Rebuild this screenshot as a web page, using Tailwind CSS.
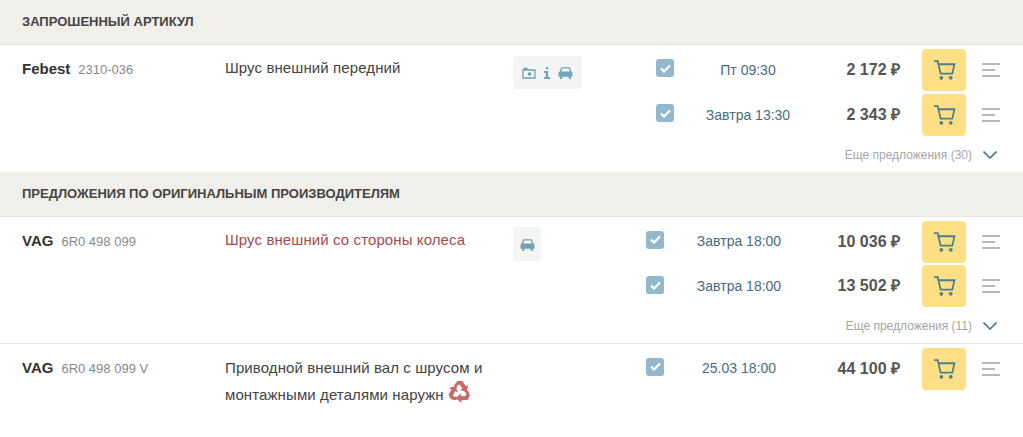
<!DOCTYPE html>
<html lang="ru">
<head>
  <meta charset="UTF-8">
  <title>Предложения</title>
  <script src="https://cdn.jsdelivr.net/npm/@tailwindcss/browser@4"></script>
</head>
<body class="w-[1023px] h-[437px] overflow-hidden bg-white font-['Liberation_Sans',Arial,sans-serif] text-[14px] text-[#444]">

  <!-- ЗАПРОШЕННЫЙ АРТИКУЛ -->
  <div class="h-[45px] pl-[22px] flex items-center bg-[#f1efe9] border-b border-[#e6e5e1] text-[13px] font-bold text-[#444]">ЗАПРОШЕННЫЙ АРТИКУЛ</div>

  <div class="h-[127px] flex">
    <div class="w-[203px] ml-[22px] pt-[13px] flex items-baseline">
      <b class="text-[15px] text-[#333]">Febest</b>
      <span class="ml-[8px] text-[13px] text-[#888]">2310-036</span>
    </div>
    <div class="w-[288px] pt-[13px] text-[15px] tracking-[0.1px] leading-[20px] text-[#444]">Шрус внешний передний</div>
    <div class="w-[127px] pt-[11px]">
      <div class="w-[69px] h-[33px] rounded-[3px] bg-[#f4f4f4] flex items-center justify-center gap-[7px] text-[#6fa3b5]">
        <svg width="14" height="12" viewBox="0 0 14 12" fill="none" stroke="currentColor" stroke-width="1.300"><path d="M1 3h12v8H1zM2 3V1.500h3V3"/><circle cx="7.500" cy="7" r="1.200" fill="currentColor"/></svg>
        <svg width="8" height="12" viewBox="0 0 8 12" fill="currentColor"><path d="M3 0h2.200v2.200H3zM1 4h4.200v6H7v2H1v-2h1.800V6H1z"/></svg>
        <svg width="15" height="13" viewBox="0 0 14 12" fill="currentColor"><path d="M3 1h8l1.500 4 1 1v4h-1.500v2h-2v-2H4v2H2v-2H.5V6l1-1zM3.800 2.300 3 5h8l-.8-2.700z" fill-rule="evenodd"/></svg>
      </div>
    </div>
    <div class="flex-1">
      <div class="h-[47px] flex items-center pt-[3px]">
        <div class="ml-[16px] -mt-[4px] w-[18px] h-[18px] rounded-[3px] bg-[#93b8cc] flex items-center justify-center">
          <svg width="11" height="9" viewBox="0 0 11 9" fill="none" stroke="#fff" stroke-width="2.200"><path d="M1 4.500l3 3 6-6"/></svg>
        </div>
        <div class="w-[148px] text-center text-[14px] text-[#4b6b80]">Пт 09:30</div>
        <div class="w-[78px] text-right text-[16px] font-bold text-[#555]">2 172 ₽</div>
        <div class="ml-[22px] w-[44px] h-[42px] rounded-[4px] bg-[#ffdf85] flex items-center justify-center">
          <svg width="23" height="20" viewBox="0 0 22 19" fill="none" stroke="#4d7f86" stroke-width="1.700"><path d="M1 1h3.500l2.800 12h11.200l2-9H5"/><circle cx="8" cy="17" r="1.800" fill="#4d7f86" stroke="none"/><circle cx="17" cy="17" r="1.800" fill="#4d7f86" stroke="none"/></svg>
        </div>
        <div class="ml-[16px] w-[18px] flex flex-col gap-[4px]"><i class="block h-[2px] w-[18px] bg-[#b9b9b9]"></i><i class="block h-[2px] w-[13px] bg-[#b9b9b9]"></i><i class="block h-[2px] w-[18px] bg-[#b9b9b9]"></i></div>
      </div>
      <div class="h-[46px] flex items-center">
        <div class="ml-[16px] -mt-[4px] w-[18px] h-[18px] rounded-[3px] bg-[#93b8cc] flex items-center justify-center">
          <svg width="11" height="9" viewBox="0 0 11 9" fill="none" stroke="#fff" stroke-width="2.200"><path d="M1 4.500l3 3 6-6"/></svg>
        </div>
        <div class="w-[148px] text-center text-[14px] text-[#4b6b80]">Завтра 13:30</div>
        <div class="w-[78px] text-right text-[16px] font-bold text-[#555]">2 343 ₽</div>
        <div class="ml-[22px] w-[44px] h-[42px] rounded-[4px] bg-[#ffdf85] flex items-center justify-center">
          <svg width="23" height="20" viewBox="0 0 22 19" fill="none" stroke="#4d7f86" stroke-width="1.700"><path d="M1 1h3.500l2.800 12h11.200l2-9H5"/><circle cx="8" cy="17" r="1.800" fill="#4d7f86" stroke="none"/><circle cx="17" cy="17" r="1.800" fill="#4d7f86" stroke="none"/></svg>
        </div>
        <div class="ml-[16px] w-[18px] flex flex-col gap-[4px]"><i class="block h-[2px] w-[18px] bg-[#b9b9b9]"></i><i class="block h-[2px] w-[13px] bg-[#b9b9b9]"></i><i class="block h-[2px] w-[18px] bg-[#b9b9b9]"></i></div>
      </div>
      <div class="h-[34px] flex items-center justify-end pr-[26px] gap-[11px] text-[12px] text-[#a5a5a5]">
        <span>Еще предложения (30)</span>
        <svg width="14" height="8" viewBox="0 0 14 8" fill="none" stroke="#4b7290" stroke-width="1.600"><path d="M.5 .5l6.500 6.500L13.500 .5"/></svg>
      </div>
    </div>
  </div>

  <!-- ПРЕДЛОЖЕНИЯ ПО ОРИГИНАЛЬНЫМ ПРОИЗВОДИТЕЛЯМ -->
  <div class="h-[45px] pl-[22px] flex items-center bg-[#f1efe9] border-b border-[#e6e5e1] text-[13px] font-bold text-[#444]">ПРЕДЛОЖЕНИЯ ПО ОРИГИНАЛЬНЫМ ПРОИЗВОДИТЕЛЯМ</div>

  <div class="h-[127px] flex border-b border-[#e6e6e6]">
    <div class="w-[203px] ml-[22px] pt-[13px] flex items-baseline">
      <b class="text-[15px] text-[#333]">VAG</b>
      <span class="ml-[8px] text-[13px] text-[#888]">6R0 498 099</span>
    </div>
    <div class="w-[288px] pt-[13px] text-[15px] tracking-[0.1px] leading-[20px] text-[#a84a4a]">Шрус внешний со стороны колеса</div>
    <div class="w-[117px] pt-[10px]">
      <div class="w-[28px] h-[34px] rounded-[3px] bg-[#f4f4f4] flex items-center justify-center text-[#6fa3b5]">
        <svg width="15" height="13" viewBox="0 0 14 12" fill="currentColor"><path d="M3 1h8l1.500 4 1 1v4h-1.500v2h-2v-2H4v2H2v-2H.5V6l1-1zM3.800 2.300 3 5h8l-.8-2.700z" fill-rule="evenodd"/></svg>
      </div>
    </div>
    <div class="flex-1">
      <div class="h-[46px] flex items-center pt-[3px]">
        <div class="ml-[16px] -mt-[4px] w-[18px] h-[18px] rounded-[3px] bg-[#93b8cc] flex items-center justify-center">
          <svg width="11" height="9" viewBox="0 0 11 9" fill="none" stroke="#fff" stroke-width="2.200"><path d="M1 4.500l3 3 6-6"/></svg>
        </div>
        <div class="w-[150px] text-center text-[14px] text-[#4b6b80]">Завтра 18:00</div>
        <div class="w-[86px] text-right text-[16px] font-bold text-[#555]">10 036 ₽</div>
        <div class="ml-[22px] w-[44px] h-[42px] rounded-[4px] bg-[#ffdf85] flex items-center justify-center">
          <svg width="23" height="20" viewBox="0 0 22 19" fill="none" stroke="#4d7f86" stroke-width="1.700"><path d="M1 1h3.500l2.800 12h11.200l2-9H5"/><circle cx="8" cy="17" r="1.800" fill="#4d7f86" stroke="none"/><circle cx="17" cy="17" r="1.800" fill="#4d7f86" stroke="none"/></svg>
        </div>
        <div class="ml-[16px] w-[18px] flex flex-col gap-[4px]"><i class="block h-[2px] w-[18px] bg-[#b9b9b9]"></i><i class="block h-[2px] w-[13px] bg-[#b9b9b9]"></i><i class="block h-[2px] w-[18px] bg-[#b9b9b9]"></i></div>
      </div>
      <div class="h-[46px] flex items-center">
        <div class="ml-[16px] -mt-[2px] w-[18px] h-[18px] rounded-[3px] bg-[#93b8cc] flex items-center justify-center">
          <svg width="11" height="9" viewBox="0 0 11 9" fill="none" stroke="#fff" stroke-width="2.200"><path d="M1 4.500l3 3 6-6"/></svg>
        </div>
        <div class="w-[150px] text-center text-[14px] text-[#4b6b80]">Завтра 18:00</div>
        <div class="w-[86px] text-right text-[16px] font-bold text-[#555]">13 502 ₽</div>
        <div class="ml-[22px] w-[44px] h-[42px] rounded-[4px] bg-[#ffdf85] flex items-center justify-center">
          <svg width="23" height="20" viewBox="0 0 22 19" fill="none" stroke="#4d7f86" stroke-width="1.700"><path d="M1 1h3.500l2.800 12h11.200l2-9H5"/><circle cx="8" cy="17" r="1.800" fill="#4d7f86" stroke="none"/><circle cx="17" cy="17" r="1.800" fill="#4d7f86" stroke="none"/></svg>
        </div>
        <div class="ml-[16px] w-[18px] flex flex-col gap-[4px]"><i class="block h-[2px] w-[18px] bg-[#b9b9b9]"></i><i class="block h-[2px] w-[13px] bg-[#b9b9b9]"></i><i class="block h-[2px] w-[18px] bg-[#b9b9b9]"></i></div>
      </div>
      <div class="h-[34px] flex items-center justify-end pr-[26px] gap-[11px] text-[12px] text-[#a5a5a5]">
        <span>Еще предложения (11)</span>
        <svg width="14" height="8" viewBox="0 0 14 8" fill="none" stroke="#4b7290" stroke-width="1.600"><path d="M.5 .5l6.500 6.500L13.500 .5"/></svg>
      </div>
    </div>
  </div>

  <div class="flex">
    <div class="w-[203px] ml-[22px] pt-[13px] flex items-baseline">
      <b class="text-[15px] text-[#333]">VAG</b>
      <span class="ml-[8px] text-[13px] text-[#888]">6R0 498 099 V</span>
    </div>
    <div class="w-[288px] pt-[10px] text-[15px] tracking-[0.1px] leading-[27px] text-[#444]">
      <div>Приводной внешний вал с шрусом и</div>
      <div class="flex items-center gap-[4px]">монтажными деталями наружн
        <svg width="23" height="23" viewBox="0 0 24 24" class="-mt-[6px]" fill="#c96a6a">
          <path id="recycle-arrow" d="M6.500 5 10 1h5l3.500 5.500L21 5l-1.500 7.500-7-2 2.500-1.500-2.500-4h-2L8 9.500z"/>
          <path d="M6.500 5 10 1h5l3.500 5.500L21 5l-1.500 7.500-7-2 2.500-1.500-2.500-4h-2L8 9.500z" transform="rotate(120 12 12.500)"/>
          <path d="M6.500 5 10 1h5l3.500 5.500L21 5l-1.500 7.500-7-2 2.500-1.500-2.500-4h-2L8 9.500z" transform="rotate(240 12 12.500)"/>
        </svg>
      </div>
    </div>
    <div class="w-[117px]"></div>
    <div class="flex-1">
      <div class="h-[46px] flex items-center pt-[3px]">
        <div class="ml-[16px] -mt-[4px] w-[18px] h-[18px] rounded-[3px] bg-[#93b8cc] flex items-center justify-center">
          <svg width="11" height="9" viewBox="0 0 11 9" fill="none" stroke="#fff" stroke-width="2.200"><path d="M1 4.500l3 3 6-6"/></svg>
        </div>
        <div class="w-[150px] text-center text-[14px] text-[#4b6b80]">25.03 18:00</div>
        <div class="w-[86px] text-right text-[16px] font-bold text-[#555]">44 100 ₽</div>
        <div class="ml-[22px] w-[44px] h-[42px] rounded-[4px] bg-[#ffdf85] flex items-center justify-center">
          <svg width="23" height="20" viewBox="0 0 22 19" fill="none" stroke="#4d7f86" stroke-width="1.700"><path d="M1 1h3.500l2.800 12h11.200l2-9H5"/><circle cx="8" cy="17" r="1.800" fill="#4d7f86" stroke="none"/><circle cx="17" cy="17" r="1.800" fill="#4d7f86" stroke="none"/></svg>
        </div>
        <div class="ml-[16px] w-[18px] flex flex-col gap-[4px]"><i class="block h-[2px] w-[18px] bg-[#b9b9b9]"></i><i class="block h-[2px] w-[13px] bg-[#b9b9b9]"></i><i class="block h-[2px] w-[18px] bg-[#b9b9b9]"></i></div>
      </div>
    </div>
  </div>

</body>
</html>
